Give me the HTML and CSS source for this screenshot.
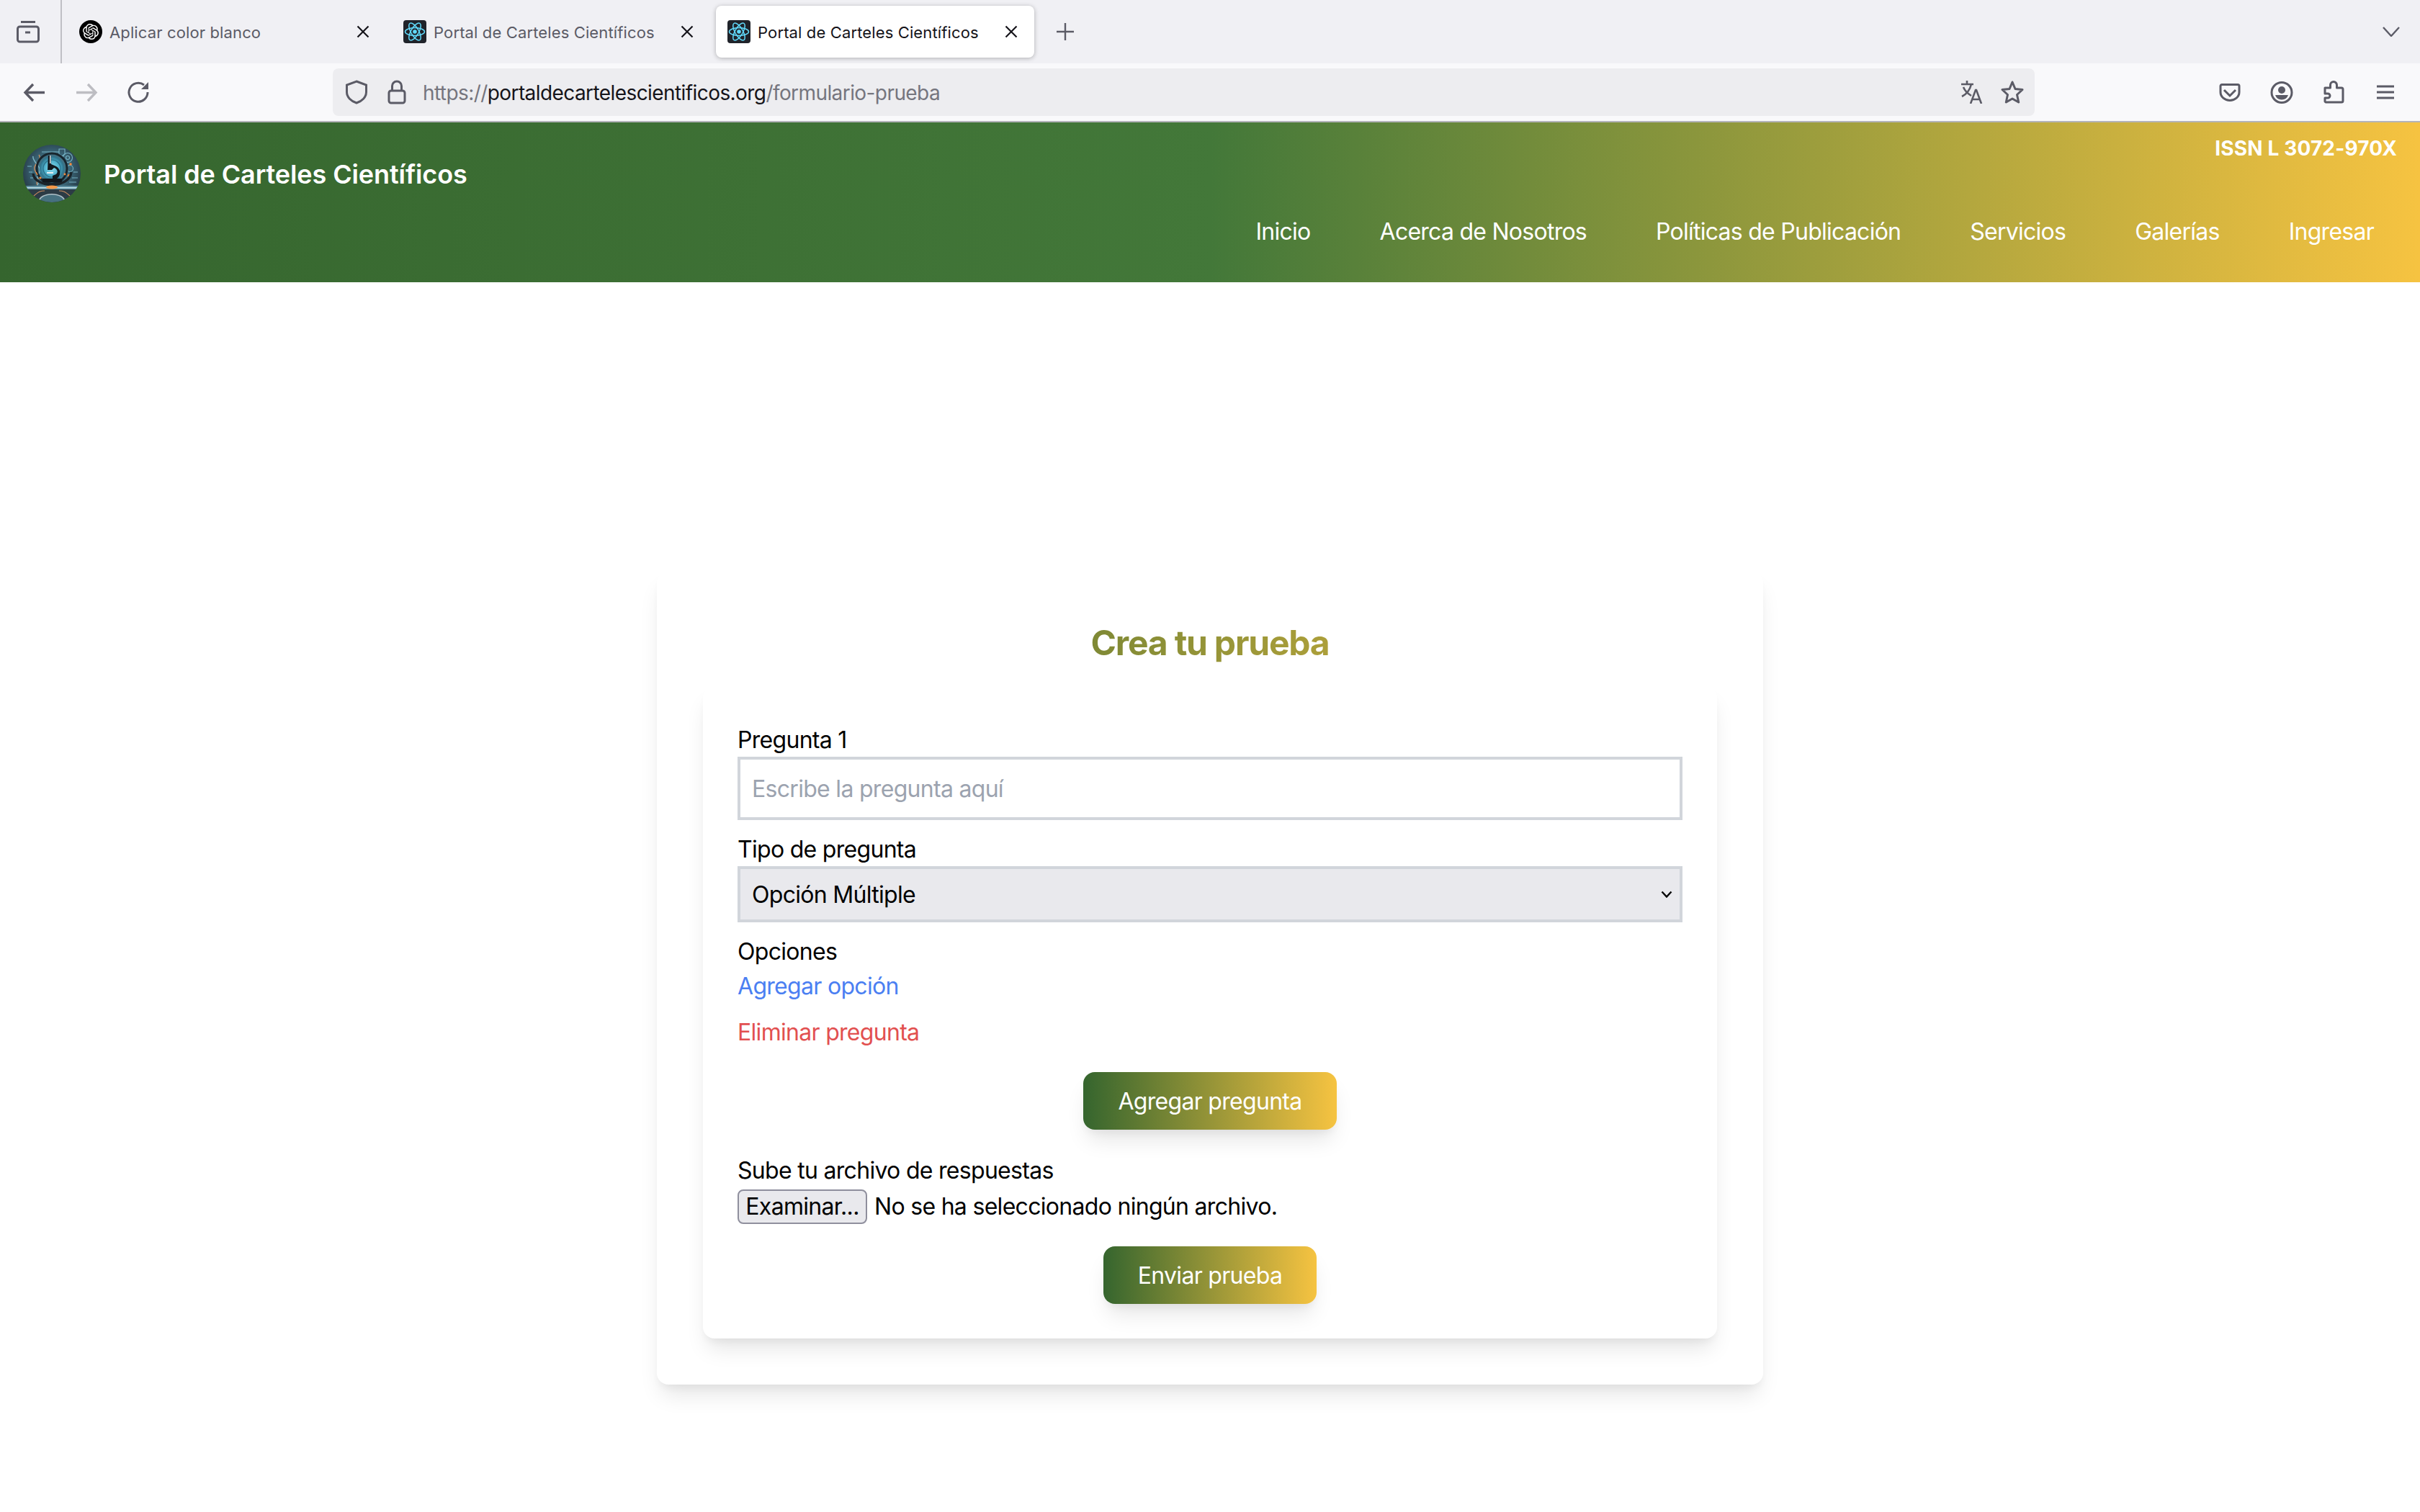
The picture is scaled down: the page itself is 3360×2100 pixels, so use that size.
FILE: index.html
```html
<!DOCTYPE html>
<html lang="es">
<head>
  <meta charset="UTF-8" />
  <title>Portal de Carteles Científicos</title>
  <link rel="stylesheet" href="styles.css">
</head>
<body>
  <svg class="sprites" width="0" height="0" aria-hidden="true">
    <symbol id="close" viewBox="0 0 18 18"><path d="M1.5 1.5l15 15M16.5 1.5l-15 15" fill="none" stroke="currentColor" stroke-width="2.2"/></symbol>
    <symbol id="react" viewBox="0 0 32 32">
      <rect width="32" height="32" rx="4" fill="#20232a"/>
      <g fill="none" stroke="#61dafb" stroke-width="1.5">
        <ellipse cx="16" cy="16" rx="13.5" ry="5.4"/>
        <ellipse cx="16" cy="16" rx="13.5" ry="5.4" transform="rotate(60 16 16)"/>
        <ellipse cx="16" cy="16" rx="13.5" ry="5.4" transform="rotate(120 16 16)"/>
      </g>
      <circle cx="16" cy="16" r="2.8" fill="#61dafb"/>
    </symbol>
  </svg>

  <!-- browser chrome -->
  <div class="tabstrip">
    <div class="view-btn">
      <svg width="32" height="32" viewBox="0 0 32 32" fill="none" stroke="#5b5b66" stroke-width="3"><path d="M6 2.500h20"/><rect x="1.500" y="9" width="29" height="21" rx="3"/><path d="M12 17h7"/></svg>
    </div>
    <div class="tab">
      <svg class="favicon" viewBox="0 0 32 32"><circle cx="16" cy="16" r="16" fill="#000"/><path transform="translate(5 5) scale(.917)" fill="#fff" d="M22.2819 9.8211a5.9847 5.9847 0 0 0-.5157-4.9108 6.0462 6.0462 0 0 0-6.5098-2.9A6.0651 6.0651 0 0 0 4.9807 4.1818a5.9847 5.9847 0 0 0-3.9977 2.9 6.0462 6.0462 0 0 0 .7427 7.0966 5.98 5.98 0 0 0 .511 4.9107 6.051 6.051 0 0 0 6.5146 2.9001A5.9847 5.9847 0 0 0 13.2599 24a6.0557 6.0557 0 0 0 5.7718-4.2058 5.9894 5.9894 0 0 0 3.9977-2.9001 6.0557 6.0557 0 0 0-.7475-7.0729zm-9.022 12.6081a4.4755 4.4755 0 0 1-2.8764-1.0408l.1419-.0804 4.7783-2.7582a.7948.7948 0 0 0 .3927-.6813v-6.7369l2.02 1.1686a.071.071 0 0 1 .038.052v5.5826a4.504 4.504 0 0 1-4.4945 4.4944zm-9.6607-4.1254a4.4708 4.4708 0 0 1-.5346-3.0137l.142.0852 4.783 2.7582a.7712.7712 0 0 0 .7806 0l5.8428-3.3685v2.3324a.0804.0804 0 0 1-.0332.0615L9.74 19.9502a4.4992 4.4992 0 0 1-6.1408-1.6464zM2.3408 7.8956a4.485 4.485 0 0 1 2.3655-1.9728V11.6a.7664.7664 0 0 0 .3879.6765l5.8144 3.3543-2.0201 1.1685a.0757.0757 0 0 1-.071 0l-4.8303-2.7865A4.504 4.504 0 0 1 2.3408 7.872zm16.5963 3.8558L13.1038 8.364 15.1192 7.2a.0757.0757 0 0 1 .071 0l4.8303 2.7913a4.4944 4.4944 0 0 1-.6765 8.1042v-5.6772a.79.79 0 0 0-.407-.667zm2.0107-3.0231l-.142-.0852-4.7735-2.7818a.7759.7759 0 0 0-.7854 0L9.409 9.2297V6.8974a.0662.0662 0 0 1 .0284-.0615l4.8303-2.7866a4.4992 4.4992 0 0 1 6.6802 4.66zM8.3065 12.863l-2.02-1.1638a.0804.0804 0 0 1-.038-.0567V6.0742a4.4992 4.4992 0 0 1 7.3757-3.4537l-.142.0805L8.704 5.459a.7948.7948 0 0 0-.3927.6813zm1.0976-2.3654l2.602-1.4998 2.6069 1.4998v2.9994l-2.5974 1.4997-2.6067-1.4997Z"/></svg>
      <span class="tab-title">Aplicar color blanco</span>
      <svg class="tab-close"><use href="#close"/></svg>
    </div>
    <div class="tab">
      <svg class="favicon"><use href="#react"/></svg>
      <span class="tab-title">Portal de Carteles Científicos</span>
      <svg class="tab-close"><use href="#close"/></svg>
    </div>
    <div class="tab active">
      <svg class="favicon"><use href="#react"/></svg>
      <span class="tab-title">Portal de Carteles Científicos</span>
      <svg class="tab-close"><use href="#close"/></svg>
    </div>
    <svg class="new-tab" width="24" height="24" viewBox="0 0 24 24"><path d="M12 0v24M0 12h24" stroke="#5b5b66" stroke-width="2.4"/></svg>
    <svg class="tabs-menu" width="24" height="14" viewBox="0 0 24 14" fill="none"><path d="M1 1l11 12L23 1" stroke="#5b5b66" stroke-width="2.4"/></svg>
  </div>

  <div class="toolbar">
    <div class="nav-btns">
      <svg width="32" height="32" viewBox="0 0 32 32" fill="none" stroke="#5b5b66" stroke-width="3.400"><path d="M30 16.500H4M14 5L3 16.500 14 28"/></svg>
      <svg width="32" height="32" viewBox="0 0 32 32" fill="none" stroke="#bdbdc2" stroke-width="3.400"><path d="M2 16.500h26M18 5l11 11.500L18 28"/></svg>
      <svg width="32" height="32" viewBox="0 0 32 32" fill="none" stroke="#5b5b66" stroke-width="3"><path d="M29 16A13 13 0 1 1 24 6"/><path d="M30 2v10H20z" fill="#5b5b66" stroke="none"/></svg>
    </div>
    <div class="urlbar">
      <svg width="32" height="34" viewBox="0 0 32 34" fill="none" stroke="#5b5b66" stroke-width="3"><path d="M16 2l13.500 5v10c0 7-6 12.500-13.500 15C8.500 29.500 2.500 24 2.500 17V7z"/></svg>
      <svg class="lock" width="26" height="34" viewBox="0 0 26 34" fill="none" stroke="#5b5b66" stroke-width="3"><rect x="2" y="15" width="22" height="17" rx="3"/><path d="M6.500 15V8.500a6.500 6.500 0 0 1 13 0V15"/></svg>
      <span class="url"><span class="url-dim">https://</span>portaldecartelescientificos.org<span class="url-dim">/formulario-prueba</span></span>
      <svg class="translate" width="32" height="32" viewBox="0 0 32 32" fill="none" stroke="#5b5b66" stroke-width="2.600"><path d="M1 5h17M9 0v5M15 5C13 13 8 19 2 22M4 9c2 5 6 9 11 12M14 32l7-19h1l7 19M16.500 26h11"/></svg>
      <svg width="32" height="32" viewBox="0 0 32 32" fill="none" stroke="#5b5b66" stroke-width="3" stroke-linejoin="round"><path d="M16 2l4 9.500 10 1-7.500 7 2.200 10.500L16 25l-8.700 5 2.200-10.500L2 12.500l10-1z"/></svg>
    </div>
    <div class="tool-btns">
      <svg width="32" height="32" viewBox="0 0 32 32" fill="none" stroke="#5b5b66" stroke-width="3"><path d="M5 5.500h22a2 2 0 0 1 2 2V16c0 6.500-6 11.500-13 11.500S3 22.500 3 16V7.500a2 2 0 0 1 2-2z"/><path d="M8 13l8 8 8-8"/></svg>
      <svg width="32" height="32" viewBox="0 0 32 32" fill="none" stroke="#5b5b66" stroke-width="3"><circle cx="16" cy="16.500" r="14"/><circle cx="16" cy="13" r="5" fill="#5b5b66" stroke="none"/><path d="M7 20h18a9.500 9.500 0 0 1-18 0z" fill="#5b5b66" stroke="none"/></svg>
      <svg width="32" height="32" viewBox="0 0 32 32" fill="none" stroke="#5b5b66" stroke-width="3" stroke-linejoin="round"><path d="M5 30h22a2 2 0 0 0 2-2V12a2 2 0 0 0-2-2h-6.500V6a4.500 4.500 0 0 0-9 0v4H4v8h4a3 3 0 0 1 0 6H4v5z"/></svg>
      <svg width="32" height="32" viewBox="0 0 32 32" stroke="#5b5b66" stroke-width="2.800"><path d="M4 8h24M4 16h24M4 24h24"/></svg>
    </div>
  </div>

  <!-- site header -->
  <header class="site-header">
    <div class="header-top">
      <div class="brand">
        <svg class="logo" width="80" height="80" viewBox="0 0 80 80">
          <defs>
            <radialGradient id="logoBg" cx="50%" cy="45%" r="58%"><stop offset="0" stop-color="#4f9db3"/><stop offset=".5" stop-color="#3d6b7d"/><stop offset="1" stop-color="#22323d"/></radialGradient>
            <radialGradient id="logoDisc"><stop offset="0" stop-color="#8fe0f2"/><stop offset=".6" stop-color="#4fb0cb"/><stop offset="1" stop-color="#2b6f88"/></radialGradient>
            <clipPath id="logoClip"><circle cx="40" cy="40" r="40"/></clipPath>
          </defs>
          <g clip-path="url(#logoClip)">
            <rect width="80" height="80" fill="url(#logoBg)"/>
            <g fill="none" stroke="#8fd4e6" stroke-width="1.100" opacity=".75">
              <circle cx="62" cy="18" r="6.500"/><circle cx="62" cy="18" r="2.500"/><circle cx="65" cy="33" r="4.500"/>
              <path d="M50 6h8v7l-4 3-4-3zM26 10h24M6 30h6M8 38h5M10 46h4M68 46h8M64 52h10M70 38h6"/>
            </g>
            <path d="M22 14c6 8-12 14-4 24s-2 12 2 18" fill="none" stroke="#c98a5e" stroke-width="1.400"/>
            <path d="M14 16c-2 8 14 14 8 24s2 12-2 16" fill="none" stroke="#7fb8c8" stroke-width="1.400"/>
            <circle cx="40" cy="33" r="21" fill="none" stroke="#18252d" stroke-width="3"/>
            <circle cx="40" cy="33" r="17" fill="url(#logoDisc)"/>
            <circle cx="40" cy="33" r="12" fill="none" stroke="#2b6f88" stroke-width="1.200"/>
            <path d="M35 15h4v12l7 3a10 10 0 0 1 1 17h7v5H27v-5h14v-4l5-2c3-3 2-7-3-9l-3 3h-6z" fill="#12181d"/>
            <path d="M37 15h1.500v11H37zM33 38h9v2h-9z" fill="#e8eef0"/>
            <path d="M14 40c2 20 50 22 53-2" fill="none" stroke="#1b242a" stroke-width="3.500"/>
            <path d="M20 42l-2-4M62 44l2-3" stroke="#f58a3c" stroke-width="1.500"/>
            <rect y="57" width="80" height="5" fill="#5d8ea0"/>
            <rect y="59" width="80" height="1.500" fill="#c4e2ea"/>
            <ellipse cx="40" cy="59" rx="8" ry="2.500" fill="#f59a4a"/>
            <circle cx="66" cy="27" r="1.800" fill="#f58a3c"/><circle cx="24" cy="46" r="1.600" fill="#f58a3c"/><circle cx="58" cy="41" r="1.400" fill="#f58a3c"/>
            <rect y="62" width="80" height="18" fill="#2c3b45"/>
            <path d="M22 80c0-15 36-15 36 0" fill="#46707f" stroke="#aebfc6" stroke-width="1.600"/>
            <path d="M14 72c8-8 12-8 16-8M66 72c-8-8-12-8-16-8" fill="none" stroke="#c98a5e" stroke-width="1.200"/>
          </g>
        </svg>
        <span class="site-title">Portal de Carteles Científicos</span>
      </div>
      <span class="issn">ISSN L 3072-970X</span>
    </div>
    <nav class="site-nav">
      <a href="#">Inicio</a>
      <a href="#">Acerca de Nosotros</a>
      <a href="#">Políticas de Publicación</a>
      <a href="#">Servicios</a>
      <a href="#">Galerías</a>
      <a href="#">Ingresar</a>
    </nav>
  </header>

  <main class="page">
    <section class="card">
      <h2 class="card-title">Crea tu prueba</h2>
      <form class="quiz-form">
        <label class="field-label" for="q1">Pregunta 1</label>
        <input class="text-input" id="q1" type="text" placeholder="Escribe la pregunta aquí">

        <label class="field-label" for="q1type">Tipo de pregunta</label>
        <div class="select-wrap">
          <select class="select-input" id="q1type">
            <option>Opción Múltiple</option>
          </select>
          <svg class="select-arrow" width="16" height="10" viewBox="0 0 16 10" fill="none"><path d="M1.500 1.500L8 8.500l6.500-7" stroke="#000" stroke-width="2.400"/></svg>
        </div>

        <div class="field-label">Opciones</div>
        <a class="link-blue" href="#">Agregar opción</a>
        <a class="link-red" href="#">Eliminar pregunta</a>

        <div class="btn-row"><button class="grad-btn" type="button">Agregar pregunta</button></div>

        <div class="field-label upload-label">Sube tu archivo de respuestas</div>
        <div class="file-row">
          <button class="file-btn" type="button">Examinar...</button>
          <span>No se ha seleccionado ningún archivo.</span>
        </div>

        <div class="btn-row submit-row"><button class="grad-btn" type="button">Enviar prueba</button></div>
      </form>
    </section>
  </main>
</body>
</html>
```

FILE: styles.css
```css
* { box-sizing: border-box; }
html, body { margin: 0; background: #fff; }
body { min-height: 100vh; font-family: Inter, "Liberation Sans", sans-serif; font-size: 32px; line-height: 48px; color: #000; }
.sprites { position: absolute; }

/* tab strip */
.tabstrip { display: flex; align-items: center; height: 88px; background: #f0f0f4; }
.view-btn { display: flex; align-items: center; justify-content: center; width: 86px; height: 88px; padding-right: 6px; border-right: 2px solid #c0c0c5; flex: none; }
.tab { display: flex; align-items: center; width: 442px; height: 72px; margin-left: 8px; padding-left: 16px; border-radius: 8px; color: #5b5b66; flex: none; }
.tab.active { background: #fff; color: #15141a; box-shadow: 0 1px 6px rgba(0,0,0,.28); }
.favicon { width: 32px; height: 32px; flex: none; }
.tab-title { margin: 2px 0 0 10px; font-size: 22px; line-height: 32px; letter-spacing: .13px; flex: 1; white-space: nowrap; }
.tab-close { width: 18px; height: 18px; margin: 0 23px 0 0; color: #15141a; flex: none; }
.new-tab { margin-left: 31px; flex: none; }
.tabs-menu { margin-left: auto; margin-right: 28px; flex: none; }

/* toolbar */
.toolbar { display: flex; align-items: center; height: 82px; padding: 0 32px; background: #f9f9fb; border-bottom: 2px solid #b4b4ba; }
.nav-btns, .tool-btns { display: flex; gap: 40px; flex: none; }
.tool-btns { margin-left: auto; }
.urlbar { display: flex; align-items: center; width: 2363px; height: 66px; margin-left: 254px; padding: 0 15px 0 17px; background: #ededf0; border-radius: 8px; }
.lock { margin-left: 27px; }
.url { margin: 2px 0 0 23px; font-size: 28px; line-height: 40px; letter-spacing: -.58px; color: #15141a; flex: 1; white-space: nowrap; }
.url-dim { color: #75757e; }
.translate { margin-right: 24px; }

/* site header */
.site-header { height: 222px; padding: 0 16px 0 32px; background: linear-gradient(90deg, #35652e 0%, #437839 50%, #f6c341 100%); color: #fff; }
.header-top { display: flex; justify-content: space-between; align-items: flex-start; height: 120px; }
.brand { display: flex; align-items: center; margin-top: 31px; }
.site-title { margin: 2px 0 0 32px; font-size: 36px; line-height: 48px; font-weight: 600; letter-spacing: -.1px; }
.issn { margin: 15px 16px 0 0; font-size: 28px; line-height: 42px; font-weight: 700; letter-spacing: .15px; }
.site-nav { display: flex; justify-content: flex-end; gap: 96px; padding-right: 48px; letter-spacing: -.74px; }
.site-nav a { color: #fff; text-decoration: none; line-height: 64px; }

/* form */
.page { padding-top: 401px; letter-spacing: -.7px; }
.card { width: 1536px; margin: 0 auto; padding: 64px; background: #fff; border-radius: 16px; box-shadow: 0 20px 30px -6px rgba(0,0,0,.1), 0 8px 12px -4px rgba(0,0,0,.05); }
.card-title { margin: 0 0 24px; font-size: 48px; line-height: 72px; font-weight: 700; letter-spacing: -1.2px; text-align: center; color: transparent; background: linear-gradient(90deg, #35652e, #f6c341); -webkit-background-clip: text; background-clip: text; }
.quiz-form { padding: 50px 48px 48px; border-radius: 16px; background: #fff; box-shadow: 0 20px 30px -6px rgba(0,0,0,.1), 0 8px 12px -4px rgba(0,0,0,.05); }
.field-label, .link-blue, .link-red { display: block; padding-top: 1px; margin-bottom: -1px; }
.text-input { display: block; width: 100%; height: 88px; margin: 0 0 16px; padding: 0 16px; border: 4px solid #d1d5db; font: inherit; letter-spacing: inherit; color: #000; background: #fff; }
.text-input::placeholder { color: #9ca3af; opacity: 1; }
.select-wrap { position: relative; margin-bottom: 16px; }
.select-input { display: block; width: 100%; height: 78px; padding: 2px 16px 0; border: 4px solid #d1d5db; border-radius: 0; font: inherit; letter-spacing: inherit; color: #000; background: #e9e9ed; appearance: none; -webkit-appearance: none; }
.select-arrow { position: absolute; right: 14px; top: 34px; }
.link-blue { color: #4b7ff2; text-decoration: none; }
.link-red { margin-top: 16px; color: #e25050; text-decoration: none; }
.btn-row { display: flex; justify-content: center; margin-top: 32px; }
.grad-btn { height: 80px; padding: 2px 48px 0; border: 0; border-radius: 16px; font: inherit; letter-spacing: inherit; color: #fff; background: linear-gradient(90deg, #35652e, #f6c341); box-shadow: 0 20px 30px -6px rgba(0,0,0,.1), 0 8px 12px -4px rgba(0,0,0,.05); }
.upload-label { margin-top: 32px; }
.file-row { display: flex; align-items: center; height: 54px; gap: 10px; }
.file-btn { width: 180px; height: 48px; padding: 0; border: 2px solid #8f8f9d; border-radius: 8px; font: inherit; letter-spacing: inherit; line-height: 44px; color: #000; background: #e9e9ed; }
.submit-row { margin-top: 28px; }
```
